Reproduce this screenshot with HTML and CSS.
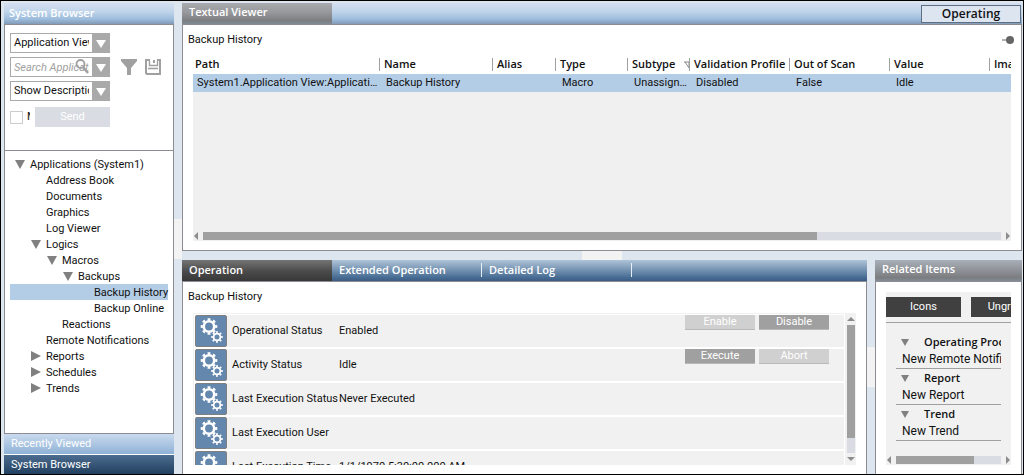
FILE: index.html
```html
<!DOCTYPE html>
<html lang="en">
<head>
    <meta charset="UTF-8">
    <meta name="viewport" content="width=device-width, initial-scale=1.0">
    <title>System Browser - Backup History</title>
    <link rel="stylesheet" href="styles.css">
</head>
<body>

    <!-- Shared icons -->
    <svg class="icon-defs" aria-hidden="true">
        <symbol id="gears" viewBox="0 0 30 30">
            <g fill="none" stroke="#fff">
                <circle cx="13" cy="10.5" r="5.2" stroke-width="2.6"/>
                <circle cx="13" cy="10.5" r="7.2" stroke-width="2.2" pathLength="32" stroke-dasharray="2 2" stroke-dashoffset="1"/>
                <circle cx="21" cy="21" r="3.4" stroke-width="1.8"/>
                <circle cx="21" cy="21" r="4.9" stroke-width="1.8" pathLength="32" stroke-dasharray="2 2" stroke-dashoffset="1"/>
            </g>
        </symbol>
    </svg>

    <div class="app">

        <!-- System Browser -->
        <aside class="sidebar">
            <h2 class="title-bar title-bar-blue">System Browser</h2>

            <form class="filters">
                <div class="combo">
                    <select aria-label="View"><option>Application View</option></select>
                    <span class="combo-arrow"></span>
                </div>
                <div class="search-row">
                    <div class="combo">
                        <input type="text" aria-label="Search" placeholder="Search Application View">
                        <svg class="search-icon" viewBox="0 0 14 15" fill="none" stroke="#a0a0a0">
                            <circle cx="5.5" cy="5" r="4" stroke-width="1.8"/>
                            <path d="M8.3 8.3L13 14" stroke-width="2.4"/>
                        </svg>
                        <span class="combo-arrow"></span>
                    </div>
                    <button type="button" class="icon-button" aria-label="Filter">
                        <svg viewBox="0 0 16 16"><path d="M0 0H16V2L10 9V16H6V9L0 2Z" fill="#a0a0a0"/></svg>
                    </button>
                    <button type="button" class="icon-button" aria-label="Save">
                        <svg viewBox="0 0 16 16" fill="none" stroke="#a0a0a0">
                            <path d="M1 1H15V15H2L1 14Z" stroke-width="2"/>
                            <path d="M4.5 0V6.5H12.5V0" stroke-width="1.4"/>
                            <path d="M3 9.5H13" stroke-width="1.6"/>
                            <path d="M5 1H12" stroke="#fff" stroke-width="2"/>
                            <path d="M9 1V4" stroke-width="2"/>
                        </svg>
                    </button>
                </div>
                <div class="combo">
                    <select aria-label="Display"><option>Show Description</option></select>
                    <span class="combo-arrow"></span>
                </div>
                <div class="send-row">
                    <input type="checkbox" id="manual">
                    <label for="manual">M</label>
                    <button type="button" class="send" disabled>Send</button>
                </div>
            </form>

            <ul class="tree">
                <li class="level-0 open">Applications (System1)</li>
                <li class="level-1">Address Book</li>
                <li class="level-1">Documents</li>
                <li class="level-1">Graphics</li>
                <li class="level-1">Log Viewer</li>
                <li class="level-1 open">Logics</li>
                <li class="level-2 open">Macros</li>
                <li class="level-3 open">Backups</li>
                <li class="level-4 selected">Backup History</li>
                <li class="level-4">Backup Online</li>
                <li class="level-2">Reactions</li>
                <li class="level-1">Remote Notifications</li>
                <li class="level-1 closed">Reports</li>
                <li class="level-1 closed">Schedules</li>
                <li class="level-1 closed">Trends</li>
            </ul>

            <button type="button" class="stack-button">Recently Viewed</button>
            <button type="button" class="stack-button active">System Browser</button>
        </aside>

        <div class="splitter vertical"><span></span></div>

        <main class="main">

            <!-- Textual Viewer -->
            <section class="panel">
                <div class="title-bar viewer-bar">
                    <h2 class="tab tab-gray">Textual Viewer</h2>
                    <button type="button" class="mode">Operating</button>
                </div>
                <div class="panel-body">
                    <div class="caption">
                        <span>Backup History</span>
                        <svg class="pin" viewBox="0 0 12 8"><path d="M0 4H6" stroke="#666"/><circle cx="8" cy="4" r="4" fill="#666"/></svg>
                    </div>
                    <div class="grid-box">
                        <table>
                            <colgroup>
                                <col class="w-path"><col class="w-name"><col class="w-alias"><col class="w-type"><col class="w-subtype">
                                <col class="w-wide"><col class="w-wide"><col class="w-wide"><col>
                            </colgroup>
                            <thead>
                                <tr>
                                    <th>Path</th>
                                    <th>Name</th>
                                    <th>Alias</th>
                                    <th>Type</th>
                                    <th class="sorted">Subtype<svg viewBox="0 0 6 8" fill="none" stroke="#888"><path d="M0 1H6M1 1L5 7V1"/></svg></th>
                                    <th>Validation Profile</th>
                                    <th>Out of Scan</th>
                                    <th>Value</th>
                                    <th>Image</th>
                                </tr>
                            </thead>
                            <tbody>
                                <tr>
                                    <td>System1.Application View:Applications.Logics</td>
                                    <td>Backup History</td>
                                    <td></td>
                                    <td>Macro</td>
                                    <td>Unassigned</td>
                                    <td>Disabled</td>
                                    <td>False</td>
                                    <td>Idle</td>
                                    <td></td>
                                </tr>
                            </tbody>
                        </table>
                        <div class="scroll-x">
                            <i class="arrow-left"></i>
                            <div class="track"><div class="thumb thumb-viewer"></div></div>
                            <i class="arrow-right"></i>
                        </div>
                    </div>
                </div>
            </section>

            <div class="splitter horizontal"><span></span></div>

            <div class="bottom">

                <!-- Operation -->
                <section class="panel">
                    <nav class="title-bar tabs">
                        <button type="button" class="tab tab-dark">Operation</button>
                        <button type="button" class="tab">Extended Operation</button>
                        <button type="button" class="tab">Detailed Log</button>
                    </nav>
                    <div class="panel-body">
                        <div class="caption"><span>Backup History</span></div>
                        <div class="operations">
                            <ul class="property-list">
                                <li>
                                    <svg class="gear"><use href="#gears"/></svg>
                                    <span class="name">Operational Status</span>
                                    <span class="value">Enabled</span>
                                    <button type="button" class="command" disabled>Enable</button>
                                    <button type="button" class="command">Disable</button>
                                </li>
                                <li>
                                    <svg class="gear"><use href="#gears"/></svg>
                                    <span class="name">Activity Status</span>
                                    <span class="value">Idle</span>
                                    <button type="button" class="command">Execute</button>
                                    <button type="button" class="command" disabled>Abort</button>
                                </li>
                                <li>
                                    <svg class="gear"><use href="#gears"/></svg>
                                    <span class="name">Last Execution Status</span>
                                    <span class="value">Never Executed</span>
                                </li>
                                <li>
                                    <svg class="gear"><use href="#gears"/></svg>
                                    <span class="name">Last Execution User</span>
                                    <span class="value"></span>
                                </li>
                                <li>
                                    <svg class="gear"><use href="#gears"/></svg>
                                    <span class="name">Last Execution Time</span>
                                    <span class="value">1/1/1970 5:30:00.000 AM</span>
                                </li>
                            </ul>
                            <div class="scroll-y">
                                <i class="arrow-up"></i>
                                <div class="track"><div class="thumb"></div></div>
                                <i class="arrow-down"></i>
                            </div>
                        </div>
                    </div>
                </section>

                <div class="splitter vertical"><span></span></div>

                <!-- Related Items -->
                <section class="panel">
                    <h2 class="title-bar title-bar-gray">Related Items</h2>
                    <div class="panel-body related">
                        <div class="related-tools">
                            <button type="button">Icons</button>
                            <button type="button">Ungroup</button>
                        </div>
                        <div class="related-groups">
                            <h3>Operating Procedure</h3>
                            <a href="#">New Remote Notification</a>
                            <h3>Report</h3>
                            <a href="#">New Report</a>
                            <h3>Trend</h3>
                            <a href="#">New Trend</a>
                        </div>
                        <div class="scroll-x">
                            <i class="arrow-left"></i>
                            <div class="track"><div class="thumb thumb-related"></div></div>
                            <i class="arrow-right"></i>
                        </div>
                    </div>
                </section>

            </div>
        </main>
    </div>

</body>
</html>
```
FILE: styles.css
```css
* {
    box-sizing: border-box;
    margin: 0;
    padding: 0;
}

body {
    font-family: Roboto, "Open Sans", sans-serif;
    font-size: 11px;
    line-height: 16px;
    color: #111;
}

button, input, select {
    font: inherit;
    color: inherit;
    border: none;
    border-radius: 0;
}

ul {
    list-style: none;
}

a {
    color: inherit;
    text-decoration: none;
}

.icon-defs {
    position: absolute;
    width: 0;
    height: 0;
}

.app {
    display: flex;
    height: 100vh;
    padding: 2px 1px 0 3px;
    border: 1px solid #000;
    background-color: #dde5ef;
    overflow: hidden;
}

/* Title bars and tabs */
.title-bar,
.tab,
.mode,
th,
.related-groups h3 {
    font-family: "Open Sans", "Noto Sans", sans-serif;
    font-weight: 600;
}

.title-bar {
    flex: none;
    height: 22px;
    font-size: 11px;
    line-height: 20px;
    color: #fff;
    border-bottom: 1px solid #8c8c92;
    overflow: hidden;
}

.title-bar-blue {
    padding-left: 5px;
    background: linear-gradient(#d5dff0, #c0d5eb 40%, #9fbedd 75%, #819bb8);
}

.title-bar-gray {
    padding-left: 7px;
    line-height: 18px;
    background: linear-gradient(#a9afb8, #7b7c7f 85%, #828d99);
}

.viewer-bar {
    display: flex;
    justify-content: space-between;
    background: linear-gradient(#d5dff0, #c0d5eb 40%, #9fbedd 75%, #819bb8);
}

.tabs {
    display: flex;
    background: linear-gradient(#afc3d9, #7795b3 45%, #456a92 85%, #3d5c82);
}

.tab {
    position: relative;
    width: 150px;
    padding: 0 0 2px 7px;
    font-size: 11px;
    line-height: 18px;
    text-align: left;
    color: #fff;
    background: none;
}

.tab-gray {
    background: linear-gradient(#a9abb0, #97989b 45%, #7c7d80 85%, #818b95);
}

.tab-dark {
    background: linear-gradient(#747474, #4a4a4a 55%, #383838);
}

.tab:not(.tab-dark):not(.tab-gray)::after {
    content: "";
    position: absolute;
    top: 3px;
    right: 0;
    width: 1px;
    height: 14px;
    background-color: #e8eef5;
}

.mode {
    width: 100px;
    height: 18px;
    margin: 2px 1px 0 0;
    font-size: 12px;
    line-height: 16px;
    color: #111;
    background-color: #dde5f0;
    border: 1px solid #5f6f82;
}

/* Sidebar */
.sidebar {
    flex: none;
    display: flex;
    flex-direction: column;
    width: 170px;
}

.filters {
    display: flex;
    flex-direction: column;
    gap: 4px;
    height: 125px;
    padding: 8px 5px 0;
    background-color: #fff;
    border-left: 1px solid #8c8c92;
    border-right: 1px solid #8c8c92;
}

.combo {
    position: relative;
    width: 100px;
    height: 20px;
}

.combo select,
.combo input {
    display: block;
    appearance: none;
    width: 100%;
    height: 20px;
    padding: 0 20px 0 3px;
    background-color: #fff;
    border: 1px solid #a9a9a9;
    outline: none;
}

.combo select {
    text-overflow: clip;
}

.combo input::placeholder {
    font-style: italic;
    color: #a0a0a0;
}

.combo-arrow {
    position: absolute;
    top: 0;
    right: 0;
    width: 18px;
    height: 20px;
    background-color: #a9a9a9;
    pointer-events: none;
}

.combo-arrow::after {
    content: "";
    position: absolute;
    top: 7px;
    left: 4px;
    border: 5px solid transparent;
    border-top: 8px solid #fff;
    border-bottom: none;
}

.search-icon {
    position: absolute;
    top: 2px;
    right: 21px;
    width: 14px;
    height: 15px;
}

.search-row {
    display: flex;
    align-items: center;
    gap: 8px;
}

.search-row .combo {
    margin-right: 3px;
}

.icon-button {
    width: 16px;
    height: 16px;
    background: none;
}

.icon-button svg {
    display: block;
    width: 16px;
    height: 16px;
}

.send-row {
    display: flex;
    align-items: center;
    width: 100px;
    height: 20px;
    margin-top: 2px;
}

.send-row input {
    flex: none;
    appearance: none;
    width: 13px;
    height: 13px;
    border: 1px solid #ccc;
    background-color: #fff;
}

.send-row label {
    flex: none;
    width: 3px;
    margin-left: 4px;
    overflow: hidden;
}

.send {
    flex: 1;
    height: 20px;
    margin-left: 5px;
    line-height: 18px;
    color: #fff;
    background-color: #d9dce2;
}

.tree {
    flex: 1;
    min-height: 0;
    padding: 5px;
    background-color: #fff;
    border: 1px solid #8c8c92;
    overflow: hidden;
}

.tree li {
    height: 16px;
    line-height: 18px;
    white-space: nowrap;
}

.level-0 { padding-left: 20px; }
.level-1 { padding-left: 36px; }
.level-2 { padding-left: 52px; }
.level-3 { padding-left: 68px; }
.level-4 { padding-left: 84px; }

.tree .selected {
    background-color: #b4cde6;
}

/* Expander triangle sits in the indent, before the label */
.open::before,
.closed::before {
    content: "";
    display: inline-block;
    margin: 0 5px 0 -15px;
    border: 5px solid transparent;
    vertical-align: -1px;
}

.open::before {
    border-top: 9px solid #808080;
    border-bottom: none;
}

.closed::before {
    border-left: 10px solid #808080;
    border-right: none;
}

.stack-button {
    flex: none;
    height: 20px;
    padding-left: 7px;
    line-height: 18px;
    text-align: left;
    color: #fff;
    background: linear-gradient(#c9daee, #8fb2d6);
}

.stack-button.active {
    border-top: 1px solid #fff;
    background: linear-gradient(#4c6c90, #22405f);
}

/* Splitters */
.splitter {
    flex: none;
    display: flex;
    align-items: center;
    justify-content: center;
}

.splitter span {
    display: block;
    background-color: #f3f3f3;
}

.vertical {
    width: 8px;
}

.vertical span {
    width: 8px;
    height: 40px;
}

.horizontal {
    height: 9px;
}

.horizontal span {
    width: 40px;
    height: 9px;
}

/* Main area */
.main {
    flex: 1;
    min-width: 0;
    display: grid;
    grid-template-rows: minmax(0, 248fr) 9px minmax(0, 214fr);
}

.bottom {
    display: grid;
    grid-template-columns: minmax(0, 1fr) 8px 147px;
    min-width: 0;
}

.panel {
    display: flex;
    flex-direction: column;
    min-width: 0;
    min-height: 0;
}

.panel-body {
    flex: 1;
    min-height: 0;
    display: flex;
    flex-direction: column;
    padding: 0 10px 9px;
    background-color: #fff;
    border: 1px solid #8c8c92;
    border-top: none;
}

.bottom .panel-body {
    border-bottom: none;
}

.caption {
    flex: none;
    display: flex;
    align-items: center;
    justify-content: space-between;
    height: 28px;
    margin: 0 -5px;
    padding-top: 1px;
}

.pin {
    width: 12px;
    height: 8px;
    margin-right: 2px;
}

.bottom .caption {
    height: 31px;
    padding: 0 0 2px;
}

/* Textual viewer grid */
.grid-box {
    flex: 1;
    min-height: 0;
    display: flex;
    flex-direction: column;
    background-color: #f0f0f0;
}

table {
    width: 100%;
    table-layout: fixed;
    border-collapse: collapse;
}

.w-path { width: 187px; }
.w-name { width: 113px; }
.w-alias { width: 63px; }
.w-type { width: 72px; }
.w-subtype { width: 62px; }
.w-wide { width: 100px; }

th, td {
    overflow: hidden;
    white-space: nowrap;
    text-align: left;
}

thead {
    background-color: #fff;
}

th {
    position: relative;
    height: 21px;
    padding: 0 0 0 4px;
}

th:first-child {
    padding-left: 2px;
}

th:not(:last-child)::after {
    content: "";
    position: absolute;
    top: 5px;
    right: 0;
    width: 1px;
    height: 13px;
    background-color: #a0a0a0;
}

.sorted svg {
    position: absolute;
    top: 8px;
    right: 0;
    width: 6px;
    height: 8px;
}

td {
    height: 18px;
    padding: 0 0 0 6px;
    text-overflow: ellipsis;
    background-color: #b4cde6;
}

td:first-child {
    padding-left: 4px;
}

/* Scroll bars */
.scroll-x {
    flex: none;
    display: flex;
    align-items: center;
    gap: 5px;
    margin-top: auto;
    height: 10px;
    padding-bottom: 1px;
}

.scroll-y {
    flex: none;
    display: flex;
    flex-direction: column;
    align-items: center;
    gap: 4px;
    width: 12px;
    padding: 4px 0;
    background-color: #f1f1f1;
    border-left: 1px solid #fff;
}

.track {
    flex: 1;
    background-color: #d9dce2;
}

.scroll-x .track,
.scroll-x .thumb {
    height: 8px;
}

.scroll-y .track {
    width: 8px;
}

.thumb {
    background-color: #a0a0a0;
}

.thumb-viewer { width: 77%; }
.thumb-related { width: 74%; }
.scroll-y .thumb { height: 88%; }

.arrow-left, .arrow-right {
    border: 4px solid transparent;
}

.arrow-left {
    margin-left: 1px;
    border-right: 4px solid #8c8c8c;
    border-left: none;
}

.arrow-right {
    margin-right: 1px;
    border-left: 4px solid #8c8c8c;
    border-right: none;
}

.arrow-up, .arrow-down {
    border: 4px solid transparent;
}

.arrow-up {
    border-bottom: 4px solid #8c8c8c;
    border-top: none;
}

.arrow-down {
    border-top: 4px solid #8c8c8c;
    border-bottom: none;
}

/* Operation list */
.operations {
    flex: 1;
    min-height: 0;
    display: flex;
}

.property-list {
    flex: 1;
    min-width: 0;
    padding: 1px 0 0 1px;
    border-top: 1px solid #f1f1f1;
    border-left: 1px solid #f1f1f1;
    overflow: hidden;
}

.property-list li {
    display: flex;
    gap: 4px;
    height: 32px;
    margin-bottom: 2px;
    padding-right: 15px;
    line-height: 31px;
    background-color: #f1f1f1;
}

.gear {
    flex: none;
    width: 32px;
    height: 32px;
    background-color: #6487ae;
    border: 1px solid #7f7f7f;
    border-radius: 2px;
}

.name {
    width: 104px;
    padding-left: 1px;
    white-space: nowrap;
}

.value {
    flex: 1;
    white-space: nowrap;
}

.command {
    width: 70px;
    height: 15px;
    line-height: 14px;
    color: #fff;
    background-color: #a0a0a0;
    border-bottom: 1px solid #b8b8b8;
}

.command:disabled {
    background-color: #d0d0d0;
}

/* Related items */
.related {
    padding-top: 10px;
}

.related-tools {
    flex: none;
    display: flex;
    gap: 10px;
    height: 31px;
    padding: 5px 0;
    background-color: #f1f1f1;
    border-bottom: 1px solid #a0a0a0;
    overflow: hidden;
}

.related-tools button {
    flex: none;
    width: 75px;
    height: 20px;
    line-height: 18px;
    color: #fff;
    background-color: #404040;
}

.related-groups {
    flex: 1;
    min-height: 0;
    padding: 10px 10px 0;
    background-color: #f1f1f1;
    overflow: hidden;
}

.related-groups h3 {
    display: flex;
    align-items: center;
    gap: 15px;
    height: 18px;
    padding-left: 5px;
    font-size: 11px;
    white-space: nowrap;
    overflow: hidden;
}

.related-groups h3::before {
    content: "";
    border: 4px solid transparent;
    border-top: 7px solid #808080;
    border-bottom: none;
}

.related-groups a {
    display: block;
    height: 18px;
    padding-left: 6px;
    line-height: 16px;
    font-size: 12px;
    white-space: nowrap;
    border-bottom: 1px solid #a0a0a0;
    overflow: hidden;
}

.related .scroll-x {
    background-color: #f1f1f1;
}
```
